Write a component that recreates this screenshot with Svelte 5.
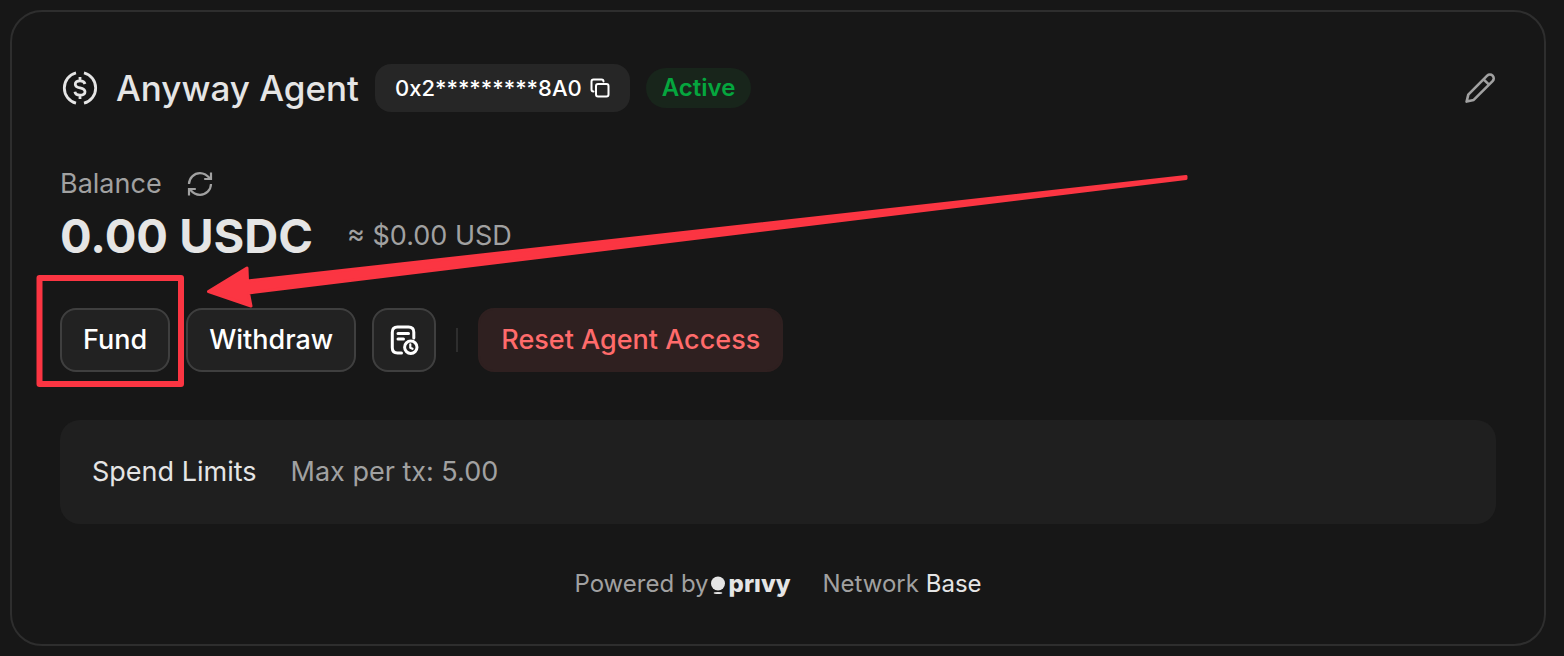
<script lang="ts">
  const address = '0x2*********8A0';
  const balance = '0.00';
  const limit = '5.00';
</script>

<main class="page">
  <section class="card" aria-labelledby="agent-name">
    <header class="head">
      <svg class="coin" width="40" height="40" viewBox="0 0 40 40" fill="none" stroke="currentColor" stroke-width="2.800" aria-hidden="true">
        <path d="M16 4.900A15.600 15.600 0 0 0 16 35.100M24 4.900A15.600 15.600 0 0 1 24 35.100" />
        <path d="M25 16C24.400 13.900 22.500 12.900 20 12.900C17.200 12.900 15.300 14.100 15.300 16.200C15.300 18.400 17 19.300 20 19.900C23.200 20.600 25 21.600 25 23.800C25 26 23 27.200 20 27.200C17.300 27.200 15.300 26 14.900 23.800M20 9V13M20 27V31" />
      </svg>
      <h1 id="agent-name">Anyway Agent</h1>
      <button class="chip" aria-label="Copy address">
        <span>{address}</span>
        <svg width="20" height="20" viewBox="0 0 20 20" fill="none" stroke="currentColor" stroke-width="2" stroke-linejoin="round" stroke-linecap="round" aria-hidden="true">
          <rect x="6" y="6" width="12.500" height="12.500" rx="2" />
          <path d="M3.500 13.500C2.400 13.500 1.500 12.600 1.500 11.500V3.500C1.500 2.400 2.400 1.500 3.500 1.500H11.500C12.600 1.500 13.500 2.400 13.500 3.500" />
        </svg>
      </button>
      <span class="badge">Active</span>
      <button class="plain edit" aria-label="Edit agent">
        <svg width="32" height="32" viewBox="0 0 32 32" fill="none" stroke="currentColor" stroke-width="2.600" stroke-linejoin="round" aria-hidden="true">
          <path d="M2.600 29.600L4.300 22.600L23.200 3.700A3.800 3.800 0 0 1 28.600 9.100L9.700 27.900L2.600 29.600ZM19.600 7.300L25 12.700" />
        </svg>
      </button>
    </header>

    <div class="balance-label">
      <span>Balance</span>
      <button class="plain" aria-label="Refresh balance">
        <svg width="28" height="28" viewBox="0 0 28 28" fill="none" stroke="currentColor" stroke-width="2.200" aria-hidden="true">
          <path d="M3 14A11 11 0 0 1 14 3.200C18.300 3.200 21.500 5.500 24.200 8.800M25 2.500V9H18.200M25 14A11 11 0 0 1 14 24.800C9.700 24.800 6.500 22.500 3.800 19.200M3 25.500V19H9.800" />
        </svg>
      </button>
    </div>
    <div class="amount">
      <strong>{balance} USDC</strong>
      <span>≈ ${balance} USD</span>
    </div>

    <div class="actions">
      <button class="btn">Fund</button>
      <button class="btn">Withdraw</button>
      <button class="btn icon" aria-label="Transaction history">
        <svg width="32" height="32" viewBox="0 0 32 32" fill="none" stroke="currentColor" stroke-width="3" stroke-linecap="round" stroke-linejoin="round" aria-hidden="true">
          <path d="M13.500 29H9.500C6 29 4.300 27.300 4.300 23.800V8.200C4.300 4.700 6 3 9.500 3H20.500C24 3 25.800 4.700 25.800 8.200V14M10 9.500H20.500M10 15H15.500" />
          <circle cx="22.800" cy="23.300" r="6.200" />
          <path stroke-width="2.200" d="M22.300 20.300V23.700L24.500 24.800" />
        </svg>
      </button>
      <span class="divider"></span>
      <button class="btn danger">Reset Agent Access</button>
    </div>

    <div class="limits">
      <span class="name">Spend Limits</span>
      <span class="muted">Max per tx: {limit}</span>
    </div>

    <footer>
      <span class="powered">
        Powered by
        <span class="privy">
          <svg width="14" height="20" viewBox="0 0 14 20" fill="currentColor" aria-hidden="true">
            <circle cx="7" cy="9.500" r="7" />
            <ellipse cx="7" cy="19" rx="4.300" ry="1" />
          </svg>
          <b>prıvy</b>
        </span>
      </span>
      <span class="network">Network <span class="name">Base</span></span>
    </footer>
  </section>

  <svg class="annotation" width="1200" height="400" viewBox="0 0 1200 400" fill="#fb3542" stroke="#fb3542" stroke-linejoin="round" aria-hidden="true">
    <rect x="39.500" y="278" width="141.500" height="106" fill="none" stroke-width="6" />
    <path stroke-width="3" d="M208.500 291.500L247 268L247.500 281L1186 176.500V178.500L248.500 293L251 306Z" />
  </svg>
</main>

<style>
  :global(body) {
    margin: 0;
    background: #171717;
  }
  .page {
    position: relative;
    padding: 10px 18px 10px 10px;
    color: #e5e5e5;
    font-family: Inter, "Liberation Sans", sans-serif;
    font-size: 27px;
    line-height: 40px;
  }
  .card {
    padding: 52px 48px 44px;
    border: 2px solid #2e2e2e;
    border-radius: 32px;
  }
  button {
    font: inherit;
    cursor: pointer;
  }
  svg {
    display: block;
    flex: none;
  }
  .head,
  .balance-label,
  .amount,
  .actions,
  .limits,
  footer,
  .powered,
  .privy {
    display: flex;
    align-items: center;
  }
  h1 {
    margin: 0 16px;
    font-size: 35px;
    font-weight: 500;
  }
  .chip {
    display: flex;
    align-items: center;
    gap: 8px;
    height: 48px;
    padding: 0 20px;
    border: 0;
    border-radius: 16px;
    background: #262626;
    color: #fff;
    font-size: 22px;
    font-weight: 500;
  }
  .badge {
    margin-left: 16px;
    padding: 0 16px;
    border-radius: 20px;
    background: #18251b;
    color: #05a63e;
    font-size: 24px;
    font-weight: 600;
  }
  .plain {
    padding: 0;
    border: 0;
    background: none;
    color: #a1a1a1;
  }
  .edit {
    margin-left: auto;
  }
  .balance-label {
    gap: 24px;
    margin-top: 52px;
    color: #a1a1a1;
  }
  .amount {
    gap: 34px;
    margin-top: 4px;
    line-height: 56px;
    color: #a1a1a1;
  }
  .amount strong {
    color: #e5e5e5;
    font-size: 47px;
    font-weight: 700;
  }
  .actions {
    gap: 16px;
    margin-top: 44px;
  }
  .btn {
    height: 64px;
    padding: 0 21px;
    border: 2px solid #3f3f3f;
    border-radius: 16px;
    background: #222;
    color: #fff;
    font-weight: 500;
  }
  .icon {
    padding: 0 14px;
  }
  .divider {
    width: 2px;
    height: 24px;
    margin: 0 4px;
    background: #2e2e2e;
  }
  .danger {
    border-color: #2f2020;
    background: #2f2020;
    color: #ff6b6b;
  }
  .limits {
    gap: 34px;
    margin-top: 48px;
    padding: 32px;
    border-radius: 20px;
    background: #1f1f1f;
  }
  .muted {
    color: #a1a1a1;
  }
  .name {
    color: #e5e5e5;
  }
  footer {
    justify-content: center;
    gap: 32px;
    margin-top: 44px;
    color: #a1a1a1;
    font-size: 24px;
    line-height: 32px;
  }
  .powered {
    gap: 2px;
  }
  .privy {
    gap: 4px;
    color: #e5e5e5;
  }
  .privy b {
    font-weight: 800;
  }
  .annotation {
    position: absolute;
    top: 0;
    left: 0;
    pointer-events: none;
  }
</style>
